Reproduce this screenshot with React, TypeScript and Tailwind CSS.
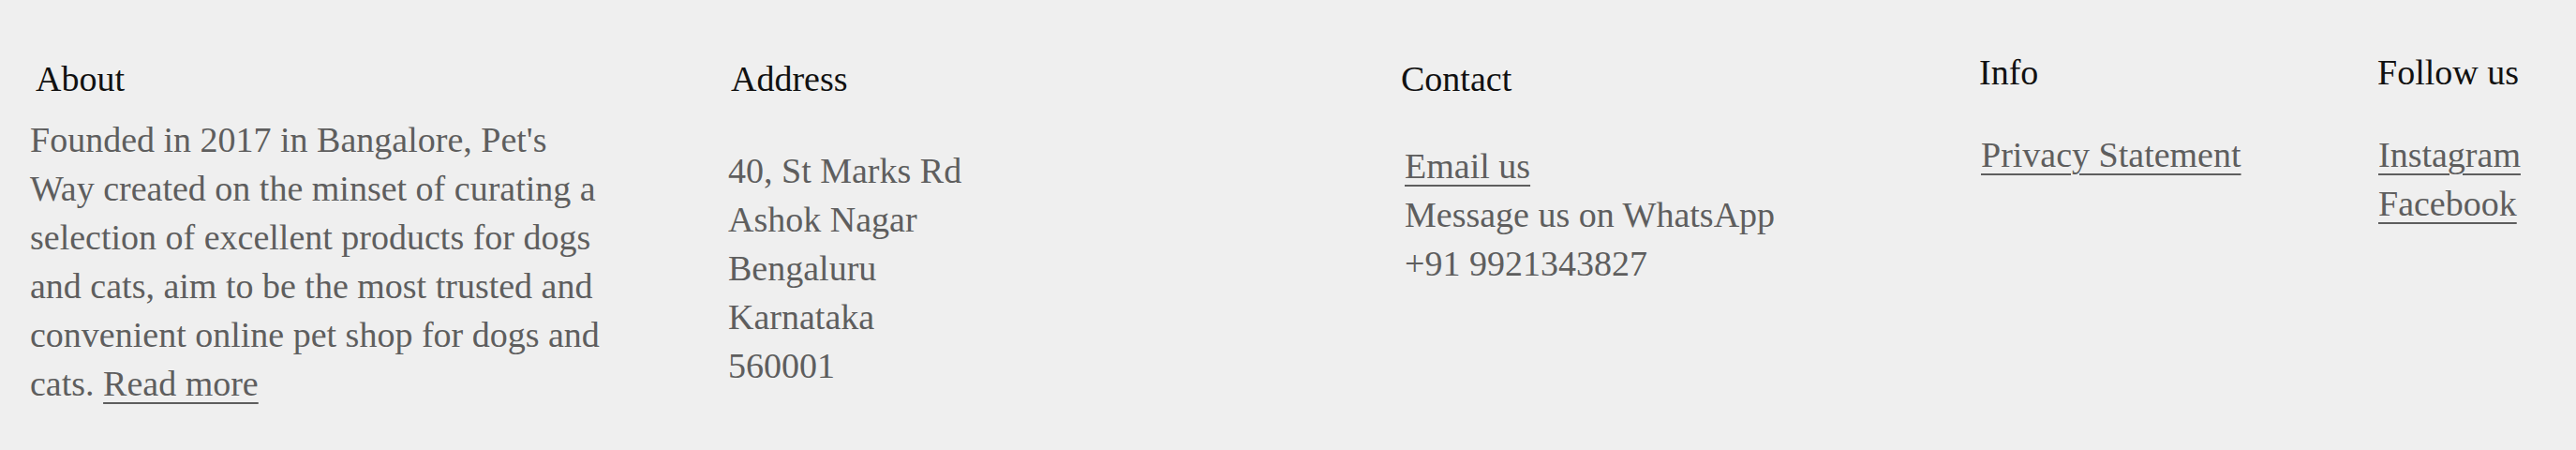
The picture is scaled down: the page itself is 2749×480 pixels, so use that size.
const serif = { fontFamily: '"Liberation Serif", "Times New Roman", serif' }

function Heading({ children, className = '' }: { children: React.ReactNode; className?: string }) {
  return <h3 className={`text-[38px] leading-[52px] font-normal text-[#111111] ${className}`}>{children}</h3>
}

function FooterLink({ children }: { children: React.ReactNode }) {
  return (
    <a href="#" className="underline decoration-2 underline-offset-[7px] text-[#5e5e5e]">
      {children}
    </a>
  )
}

export default function App() {
  return (
    <footer className="min-h-[480px] bg-[#efefef] text-[38px] leading-[52px] text-[#5e5e5e]" style={serif}>
      <div className="flex pl-[32px]">
        <div className="w-[745px] shrink-0 pt-[58px]">
          <Heading className="pl-[6px]">About</Heading>
          <p className="mt-[13px] w-[660px]">
            Founded in 2017 in Bangalore, Pet's
            <br />
            Way created on the minset of curating a
            <br />
            selection of excellent products for dogs
            <br />
            and cats, aim to be the most trusted and
            <br />
            convenient online pet shop for dogs and
            <br />
            cats. <FooterLink>Read more</FooterLink>
          </p>
        </div>

        <div className="w-[718px] shrink-0 pt-[58px]">
          <Heading className="pl-[3px]">Address</Heading>
          <ul className="mt-[46px]">
            <li>40, St Marks Rd</li>
            <li>Ashok Nagar</li>
            <li>Bengaluru</li>
            <li>Karnataka</li>
            <li>560001</li>
          </ul>
        </div>

        <div className="w-[617px] shrink-0 pt-[58px]">
          <Heading>Contact</Heading>
          <ul className="mt-[41px] pl-[4px]">
            <li>
              <FooterLink>Email us</FooterLink>
            </li>
            <li>Message us on WhatsApp</li>
            <li>+91 9921343827</li>
          </ul>
        </div>

        <div className="w-[425px] shrink-0 pt-[51px]">
          <Heading>Info</Heading>
          <ul className="mt-[36px] pl-[2px]">
            <li>
              <FooterLink>Privacy Statement</FooterLink>
            </li>
          </ul>
        </div>

        <div className="flex-1 pt-[51px]">
          <Heading>Follow us</Heading>
          <ul className="mt-[36px] pl-[1px]">
            <li>
              <FooterLink>Instagram</FooterLink>
            </li>
            <li>
              <FooterLink>Facebook</FooterLink>
            </li>
          </ul>
        </div>
      </div>
    </footer>
  )
}
